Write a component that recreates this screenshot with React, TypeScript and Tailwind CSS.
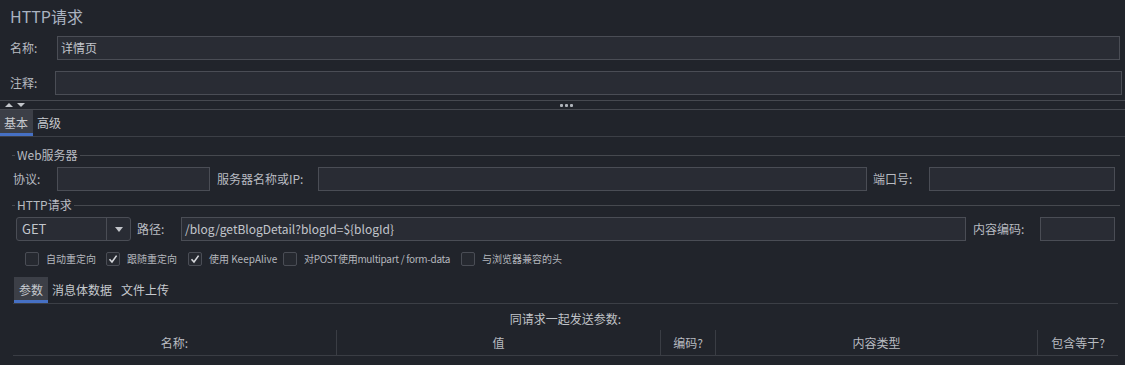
import React from "react";

const font = { fontFamily: '"Noto Sans CJK SC", "Noto Sans", sans-serif' };

function Input({ w, value }: { w: string; value?: string }) {
  return (
    <div
      className={`${w} h-[24px] bg-[#292c34] border border-[#4a4d55] flex items-center pl-[3px] text-[12px] text-[#c3c6cc] whitespace-nowrap overflow-hidden`}
    >
      {value}
    </div>
  );
}

function Check({ w, checked, label, tight }: { w: string; checked?: boolean; label: string; tight?: boolean }) {
  return (
    <div className={`${w} flex items-center h-[14px]`}>
      <div className="w-[14px] h-[14px] rounded-[2px] border border-[#4a4d55] bg-[#262930] flex items-center justify-center shrink-0">
        {checked && (
          <svg width="10" height="10" viewBox="0 0 10 10">
            <path d="M1.5 5.2 L4 8 L8.6 1.6" fill="none" stroke="#d6d8dc" strokeWidth="1.6" />
          </svg>
        )}
      </div>
      <span
        className={`ml-[7px] text-[10px] text-[#b4b7bd] whitespace-nowrap leading-none ${tight ? "tracking-[-0.3px]" : ""}`}
      >
        {label}
      </span>
    </div>
  );
}

function FieldTitle({ title }: { title: string }) {
  return (
    <div className="flex items-center h-[14px] ml-[12px] w-[1108px]">
      <div className="w-[3px] h-px bg-[#46494f]" />
      <span className="px-[2px] text-[12px] text-[#b8bbc1] leading-none whitespace-nowrap">{title}</span>
      <div className="flex-1 h-px bg-[#46494f]" />
    </div>
  );
}

export default function App() {
  return (
    <div className="w-[1125px] h-[365px] bg-[#21242b] overflow-hidden text-[#b8bbc1]" style={font}>
      {/* Title */}
      <div className="h-[31px] flex items-center pl-[10px] text-[16px] text-[#aab3c0]">HTTP请求</div>

      {/* Name */}
      <div className="mt-[5px] h-[24px] flex items-center">
        <div className="w-[57px] pl-[10px] text-[12px]">名称:</div>
        <Input w="w-[1063px]" value="详情页" />
      </div>

      {/* Comment */}
      <div className="mt-[11px] h-[24px] flex items-center">
        <div className="w-[55px] pl-[10px] text-[12px]">注释:</div>
        <Input w="w-[1067px]" />
      </div>

      {/* Splitter */}
      <div className="mt-[5px] h-[10px] border-y border-[#464950] flex items-center">
        <div className="flex items-center gap-[4px] ml-[5px]">
          <div className="w-0 h-0 border-l-[4px] border-r-[4px] border-b-[4px] border-l-transparent border-r-transparent border-b-[#c2c5ca]" />
          <div className="w-0 h-0 border-l-[4px] border-r-[4px] border-t-[4px] border-l-transparent border-r-transparent border-t-[#c2c5ca]" />
        </div>
        <div className="flex gap-[2px] ml-[535px]">
          <div className="w-[3px] h-[3px] bg-[#aeb2b9] rounded-[1px]" />
          <div className="w-[3px] h-[3px] bg-[#aeb2b9] rounded-[1px]" />
          <div className="w-[3px] h-[3px] bg-[#aeb2b9] rounded-[1px]" />
        </div>
      </div>

      {/* Tabs */}
      <div className="h-[27px] border-b border-[#3c3f46] flex items-stretch text-[12px]">
        <div className="w-[33px] bg-[#3c3f47] border-b-[3px] border-[#4670c4] flex items-center pl-[4px] pt-[2px] text-[#c6c9ce]">基本</div>
        <div className="flex items-center ml-[4px] text-[#c6c9ce]">高级</div>
      </div>

      {/* Web server */}
      <div className="mt-[11px]">
        <FieldTitle title="Web服务器" />
      </div>
      <div className="mt-[5px] h-[24px] flex items-center text-[12px]">
        <div className="ml-[13px] w-[44px]">协议:</div>
        <Input w="w-[153px]" />
        <div className="ml-[7px] w-[101px]">服务器名称或IP:</div>
        <Input w="w-[549px]" />
        <div className="ml-[6px] w-[56px]">端口号:</div>
        <Input w="w-[186px]" />
      </div>

      {/* HTTP request */}
      <div className="mt-[7px]">
        <FieldTitle title="HTTP请求" />
      </div>
      <div className="mt-[5px] h-[24px] flex items-center text-[12px]">
        <div className="ml-[16px] w-[115px] h-[24px] rounded-[3px] bg-[#292c34] border border-[#4a4d55] flex items-stretch">
          <div className="w-[90px] border-r border-[#4a4d55] flex items-center pl-[5px] text-[13px] text-[#c3c6cc]">GET</div>
          <div className="flex-1 flex items-center justify-center">
            <div className="w-0 h-0 border-l-[4px] border-r-[4px] border-t-[5px] border-l-transparent border-r-transparent border-t-[#c2c5ca]" />
          </div>
        </div>
        <div className="ml-[6px] w-[44px]">路径:</div>
        <Input w="w-[785px]" value="/blog/getBlogDetail?blogId=${blogId}" />
        <div className="ml-[7px] w-[67px]">内容编码:</div>
        <Input w="w-[75px]" />
      </div>

      {/* Checkboxes */}
      <div className="mt-[11px] h-[14px] flex items-center ml-[25px]">
        <Check w="w-[81px]" label="自动重定向" />
        <Check w="w-[82px]" checked label="跟随重定向" />
        <Check w="w-[95px]" checked label="使用 KeepAlive" />
        <Check w="w-[178px]" label="对POST使用multipart / form-data" tight />
        <Check w="w-[120px]" label="与浏览器兼容的头" />
      </div>

      {/* Sub tabs */}
      <div className="mt-[11px] ml-[13px] w-[1105px] h-[27px] border-b border-[#3c3f46] flex items-stretch text-[12px] text-[#c6c9ce]">
        <div className="ml-[1px] w-[34px] bg-[#3c3f47] border-b-[3px] border-[#4670c4] flex items-center justify-center pt-[2px]">参数</div>
        <div className="flex items-center ml-[4px]">消息体数据</div>
        <div className="flex items-center ml-[9px]">文件上传</div>
      </div>

      {/* Caption */}
      <div className="ml-[13px] w-[1105px] h-[26px] pt-[3px] flex items-center justify-center text-[12px] text-[#c0c3c8]">
        同请求一起发送参数:
      </div>

      {/* Table header */}
      <div className="ml-[13px] w-[1105px] h-[26px] border-b border-[#3a3d44] flex items-stretch text-[12px] text-[#b8bbc1]">
        <div className="w-[323px] flex items-center justify-center">名称:</div>
        <div className="w-[324px] border-l border-[#3a3d44] flex items-center justify-center">值</div>
        <div className="w-[55px] border-l border-[#3a3d44] flex items-center justify-center">编码?</div>
        <div className="w-[322px] border-l border-[#3a3d44] flex items-center justify-center">内容类型</div>
        <div className="w-[81px] border-l border-[#3a3d44] flex items-center justify-center">包含等于?</div>
      </div>
    </div>
  );
}
